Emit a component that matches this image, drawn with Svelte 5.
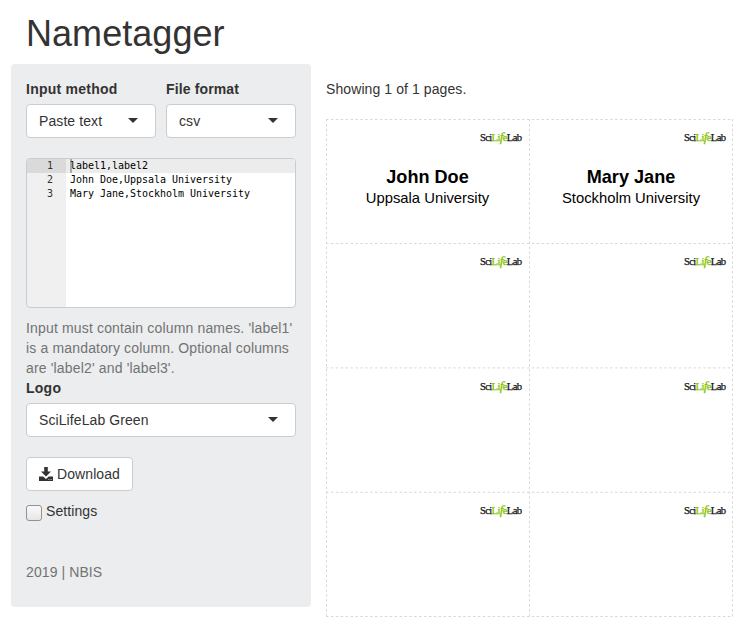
<script>
  const lines = ['label1,label2', 'John Doe,Uppsala University', 'Mary Jane,Stockholm University'];
  const tags = [
    { name: 'John Doe', org: 'Uppsala University' },
    { name: 'Mary Jane', org: 'Stockholm University' },
    {}, {}, {}, {}, {}, {}
  ];
  const xs = [0.5, 203.5, 406.5];
  const ys = [0.5, 124.5, 248.9, 373.3, 497.5];
</script>

{#snippet select(value)}
  <div class="select"><span>{value}</span><i class="caret"></i></div>
{/snippet}

<main>
  <h1>Nametagger</h1>
  <div class="row">
    <aside>
      <div class="pair">
        <div><label>Input method</label>{@render select('Paste text')}</div>
        <div><label class="format">File format</label>{@render select('csv')}</div>
      </div>
      <div class="editor">
        {#each lines as line, i}
          <div class="line" class:active={i === 0}><span class="num">{i + 1}</span><span class="code">{line}</span></div>
        {/each}
      </div>
      <p class="help">Input must contain column names. 'label1' is a mandatory column. Optional columns are 'label2' and 'label3'.</p>
      <label>Logo</label>
      {@render select('SciLifeLab Green')}
      <button>
        <svg width="14" height="14" viewBox="0 0 14 14"><path fill="#333" d="M5.2 0h3.6v4.6h3.2L7 9.6 2 4.6h3.2z"/><path fill="#333" fill-rule="evenodd" d="M0 9.5h4.2L7 12l2.8-2.5H14V14H0zM9.4 12.2v.8h1v-.8zm2.2 0v.8h1v-.8z"/></svg>
        <span>Download</span>
      </button>
      <div class="check"><i></i><span>Settings</span></div>
      <p class="foot">2019 | NBIS</p>
    </aside>
    <section>
      <p class="status">Showing 1 of 1 pages.</p>
      <div class="sheet">
        {#each tags as tag}
          <div class="tag">
            <svg class="logo" width="44" height="18" viewBox="0 0 44 18">
              <text x="1" y="12.6" font-family="Liberation Serif, serif" font-size="10.6" textLength="42" lengthAdjust="spacing" fill="#111" stroke="#111" stroke-width="0.25">Sci<tspan fill="#80c200" stroke="#80c200">Li<tspan font-size="13.5" font-style="italic">f</tspan>e</tspan>Lab</text>
            </svg>
            {#if tag.name}
              <strong>{tag.name}</strong>
              <span>{tag.org}</span>
            {/if}
          </div>
        {/each}
        <svg class="cuts" width="408" height="498" viewBox="0 0 408 498">
          <g stroke="#d8d8d8" stroke-width="1" stroke-dasharray="2.5 2.4">
            {#each xs as x}<line x1={x} x2={x} y1="0" y2="498" />{/each}
            {#each ys as y}<line x1="0" x2="407" y1={y} y2={y} />{/each}
          </g>
        </svg>
      </div>
    </section>
  </div>
</main>

<style>
  :global(body) { background: #fff; }
  main {
    box-sizing: border-box;
    width: 744px;
    height: 632px;
    padding: 14px 11px 0;
    overflow: hidden;
    font: 14px/20px "Liberation Sans", Arial, sans-serif;
    letter-spacing: 0.09px;
    color: #333;
  }
  h1 { margin: 0 15px 10px; font-size: 36px; line-height: 40px; font-weight: 400; letter-spacing: 0.05px; }
  .row { display: flex; gap: 15px; }
  aside { box-sizing: border-box; width: 300px; height: 543px; padding: 15px; background: #ebedee; border-radius: 4px; }
  .pair { display: grid; grid-template-columns: 130px 130px; gap: 10px; }
  label { display: block; margin-bottom: 5px; font-weight: 700; letter-spacing: 0.25px; }
  .format { letter-spacing: 0.13px; }
  .select {
    box-sizing: border-box; height: 34px; padding: 0 17px 0 12px;
    display: flex; align-items: center; justify-content: space-between;
    background: #fff; border: 1px solid #ccc; border-radius: 4px;
  }
  .caret { margin-bottom: 2px; border: 5px solid transparent; border-top-color: #333; border-bottom: 0; }
  .editor {
    box-sizing: border-box; height: 150px; margin: 20px 0 10px; overflow: hidden;
    border: 1px solid #ccc; border-radius: 4px;
    background: linear-gradient(90deg, #f0f0f0 39px, #fff 39px);
    font: 10px/14px "DejaVu Sans Mono", monospace; letter-spacing: -0.02px; color: #000;
  }
  .line { display: flex; height: 14px; white-space: pre; }
  .num { box-sizing: border-box; width: 39px; padding-right: 13px; text-align: right; color: #333; }
  .code { flex: 1; padding-left: 4px; }
  .active .num { background: #dadada; }
  .active .code { background: linear-gradient(#aaa, #aaa) 4px 0 / 2px 14px no-repeat #ececec; }
  .help { margin: 0; color: #737373; letter-spacing: 0.16px; white-space: normal; }
  button {
    display: flex; align-items: center; gap: 4px; box-sizing: border-box;
    width: 107px; height: 34px; margin: 20px 0 10px; padding: 0 12px;
    background: #fff; border: 1px solid #ccc; border-radius: 4px;
    font: inherit; color: inherit; letter-spacing: 0.09px;
  }
  .check { display: flex; gap: 4px; }
  .check i {
    box-sizing: border-box; width: 16px; height: 16px; margin-top: 4px;
    border: 1px solid #929290; border-radius: 3px; background: linear-gradient(#fafafa, #e6e6e5);
  }
  .foot { margin: 41px 0 0; color: #737373; }
  .status { margin: 15px 0 20px; }
  .sheet { position: relative; display: grid; grid-template: repeat(4, 124.4px) / 203px 204px; width: 408px; height: 498px; }
  .cuts { position: absolute; inset: 0; }
  .tag { display: flex; flex-direction: column; align-items: center; color: #000; letter-spacing: 0; }
  .logo { align-self: flex-end; margin: 9px 6px 21px 0; flex: none; }
  strong { font-size: 18.1px; line-height: 21px; }
  .tag span { font-size: 14.8px; line-height: 21px; }
</style>
